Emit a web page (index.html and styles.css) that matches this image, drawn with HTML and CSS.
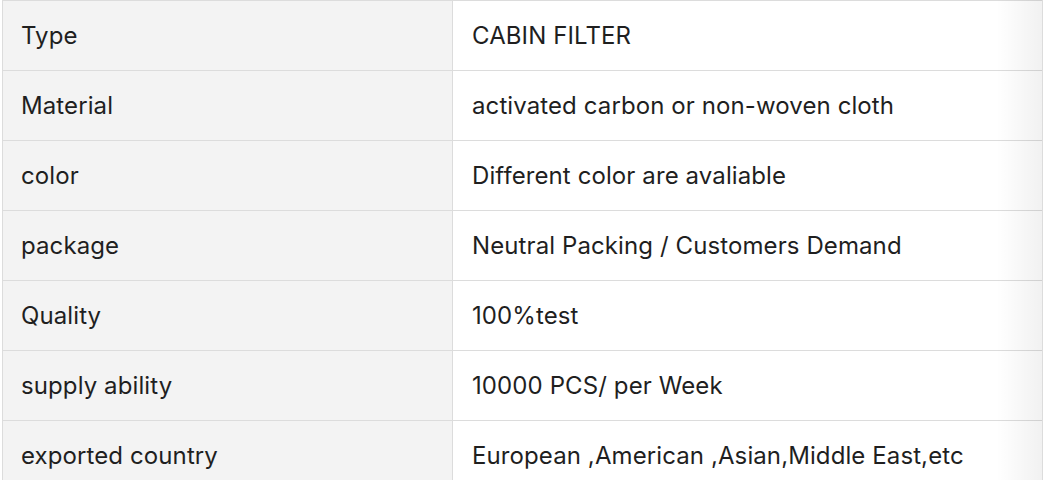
FILE: index.html
```html
<!DOCTYPE html>
<html>
<head>
<meta charset="utf-8">
<link rel="stylesheet" href="styles.css">
</head>
<body>
<div class="wrap">
  <table class="spec">
    <tbody>
      <tr><td class="k">Type</td><td class="v">CABIN FILTER</td></tr>
      <tr><td class="k">Material</td><td class="v">activated carbon or non-woven cloth</td></tr>
      <tr><td class="k">color</td><td class="v">Different color are avaliable</td></tr>
      <tr><td class="k">package</td><td class="v">Neutral Packing / Customers Demand</td></tr>
      <tr><td class="k">Quality</td><td class="v">100%test</td></tr>
      <tr><td class="k">supply ability</td><td class="v">10000 PCS/ per Week</td></tr>
      <tr><td class="k">exported country</td><td class="v">European ,American ,Asian,Middle East,etc</td></tr>
    </tbody>
  </table>
</div>
</body>
</html>
```
FILE: styles.css
```css
html, body {
  margin: 0;
  padding: 0;
  background: #fff;
}
.wrap {
  position: relative;
  margin-left: 2px;
  width: 1041px;
}
.wrap::after {
  content: "";
  position: absolute;
  top: 0;
  right: 1px;
  bottom: 0;
  width: 46px;
  background: linear-gradient(to right, rgba(0,0,0,0), rgba(0,0,0,0.055));
  pointer-events: none;
}
.spec {
  width: 1041px;
  border-collapse: collapse;
  font-family: Inter, "Liberation Sans", sans-serif;
  font-size: 24px;
  letter-spacing: 0.1px;
  color: #1f1f1f;
}
.spec td {
  height: 70px;
  padding: 0 19px;
  border: 1px solid #dcdcdc;
  vertical-align: middle;
  box-sizing: border-box;
}
.spec td.k {
  width: 450px;
  padding-left: 18px;
  background: #f3f3f3;
}
.spec td.v {
  background: #fff;
}
```
